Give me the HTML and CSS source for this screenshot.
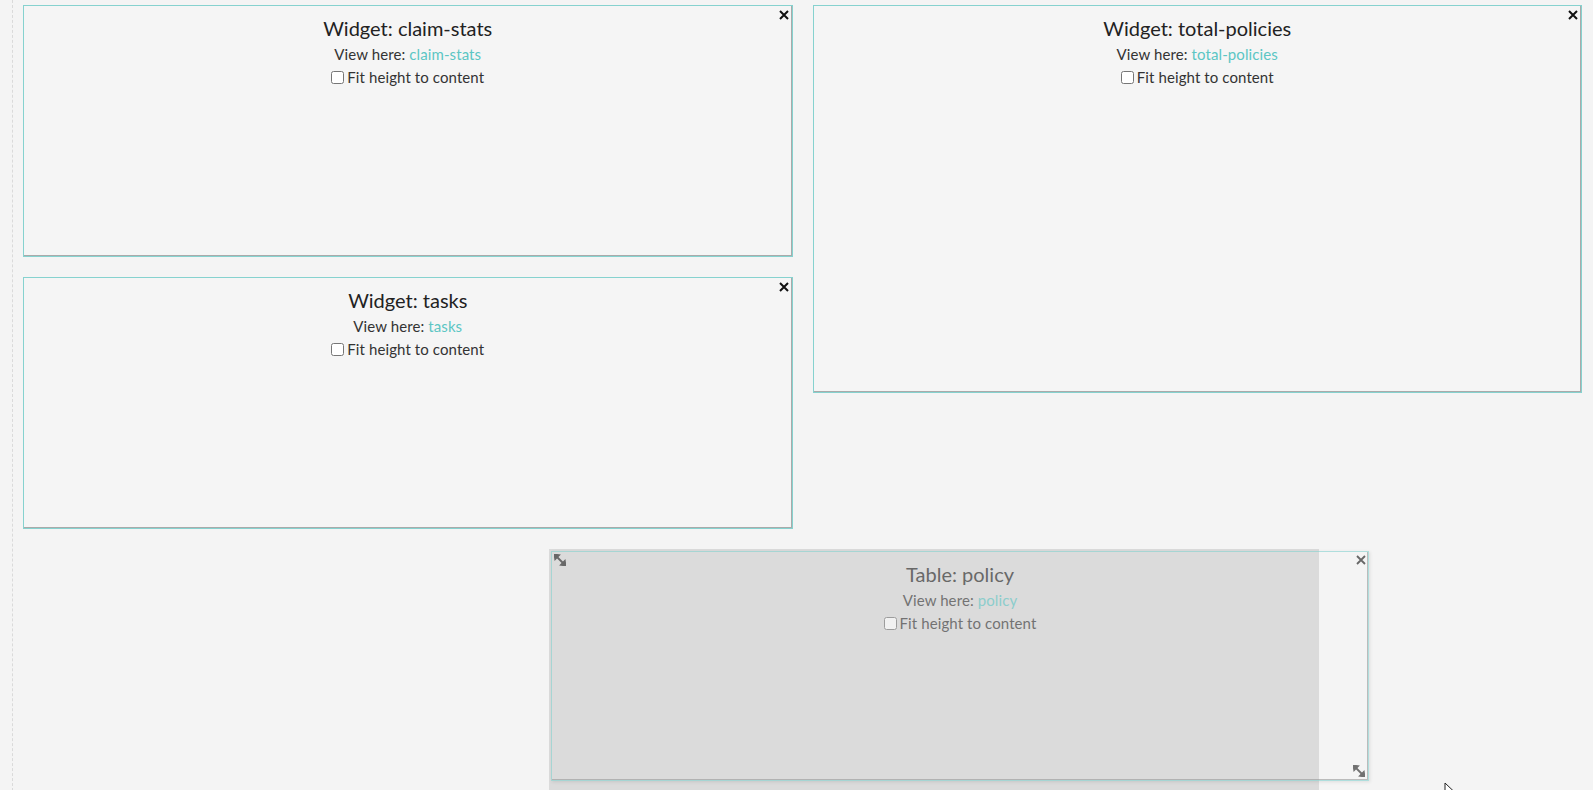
FILE: index.html
```html
<!DOCTYPE html>
<html lang="en">
<head>
    <meta charset="UTF-8">
    <title>Dashboard layout</title>
    <link rel="stylesheet" href="styles.css">
</head>
<body>
    <div id="board">
        <div class="widget w-claim">
            <svg class="close" viewBox="0 0 10 10"><path d="M1 1L9 9M9 1L1 9"/></svg>
            <div class="title">Widget: claim-stats</div>
            <div class="view">View here: <a href="#">claim-stats</a></div>
            <label class="fit"><input type="checkbox">Fit height to content</label>
        </div>
        <div class="widget w-total">
            <svg class="close" viewBox="0 0 10 10"><path d="M1 1L9 9M9 1L1 9"/></svg>
            <div class="title">Widget: total-policies</div>
            <div class="view">View here: <a href="#">total-policies</a></div>
            <label class="fit"><input type="checkbox">Fit height to content</label>
        </div>
        <div class="widget w-tasks">
            <svg class="close" viewBox="0 0 10 10"><path d="M1 1L9 9M9 1L1 9"/></svg>
            <div class="title">Widget: tasks</div>
            <div class="view">View here: <a href="#">tasks</a></div>
            <label class="fit"><input type="checkbox">Fit height to content</label>
        </div>
        <div class="placeholder"></div>
    </div>

    <!-- item currently being dragged -->
    <div class="widget dragging">
        <svg class="resize tl" viewBox="0 0 12 12"><path d="M3 3L9 9"/><polygon points="0.5,0.5 5,1.2 1.2,5"/><polygon points="11.5,11.5 7,10.8 10.8,7"/></svg>
        <svg class="close" viewBox="0 0 10 10"><path d="M1 1L9 9M9 1L1 9"/></svg>
        <div class="title">Table: policy</div>
        <div class="view">View here: <a href="#">policy</a></div>
        <label class="fit"><input type="checkbox">Fit height to content</label>
        <svg class="resize br" viewBox="0 0 12 12"><path d="M3 3L9 9"/><polygon points="0.5,0.5 5,1.2 1.2,5"/><polygon points="11.5,11.5 7,10.8 10.8,7"/></svg>
    </div>

    <svg class="cursor" viewBox="0 0 12 18"><path d="M1 1L1 15L4.5 11.5L7 17L9 16L6.5 10.5L11 10.5Z"/></svg>
</body>
</html>
```

FILE: styles.css
```css
html, body {
    height: 100%;
}
body {
    margin: 0;
    font-family: Lato, "Open Sans", sans-serif;
    background-color: #f4f4f4;
    color: #333;
    overflow: hidden;
}
#board {
    box-sizing: border-box;
    min-height: 100%;
    margin-left: 12px;
    border-left: 1px dashed #dadada;
    padding: 5px 11px 0 10px;
    display: grid;
    grid-template-columns: repeat(12, 1fr);
    grid-auto-rows: 116px;
    gap: 20px;
}
.widget {
    position: relative;
    box-sizing: border-box;
    border: 1px solid #86d2cf;
    box-shadow: inset -1px -1px 0 #aaa;
    background-color: #f5f5f5;
    text-align: center;
    padding-top: 10px;
}
.w-claim {
    grid-column: 1 / span 6;
    grid-row: 1 / span 2;
}
.w-total {
    grid-column: 7 / span 6;
    grid-row: 1 / span 3;
}
.w-tasks {
    grid-column: 1 / span 6;
    grid-row: 3 / span 2;
}
.placeholder {
    grid-column: 5 / span 6;
    grid-row: 5 / span 2;
    background-color: #dbdbdb;
}
.title {
    font-size: 20px;
    line-height: 24px;
    color: #222;
}
.view {
    font-size: 15px;
    line-height: 22px;
    margin-top: 3px;
    letter-spacing: 0.1px;
}
.view a {
    color: #5cc6c4;
    text-decoration: none;
}
.fit {
    display: block;
    font-size: 15px;
    line-height: 24px;
    letter-spacing: 0.1px;
}
.fit input {
    margin: 0 3px 0 0;
    width: 13px;
    height: 13px;
    vertical-align: -1px;
}
.close {
    position: absolute;
    top: 4px;
    right: 3px;
    width: 10px;
    height: 10px;
    stroke: #111;
    stroke-width: 2;
}
.dragging {
    position: absolute;
    left: 551px;
    top: 551px;
    width: 818px;
    height: 230px;
    background-color: transparent;
    opacity: 0.62;
    box-shadow: inset -1px -1px 0 #999, 1px 1px 3px rgba(0, 0, 0, 0.15);
}
.dragging .close {
    top: 3px;
    right: 2px;
    stroke-width: 1.8;
}
.resize {
    position: absolute;
    width: 12px;
    height: 12px;
    stroke: #222;
    stroke-width: 1.8;
    fill: #222;
}
.resize.tl {
    top: 2px;
    left: 2px;
}
.resize.br {
    bottom: 3px;
    right: 3px;
}
.cursor {
    position: absolute;
    left: 1444px;
    top: 782px;
    width: 12px;
    height: 18px;
    fill: #fff;
    stroke: #222;
    stroke-width: 1;
}
```
